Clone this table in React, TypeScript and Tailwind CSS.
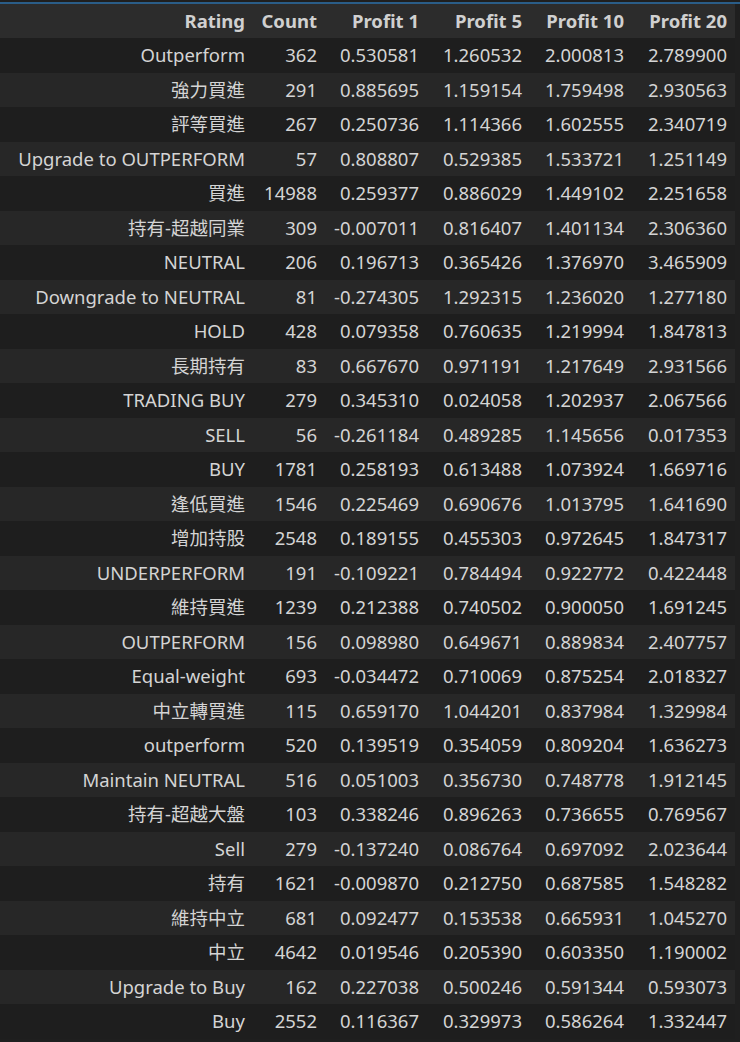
const rows: [string, number, string, string, string, string][] = [
  ["Outperform", 362, "0.530581", "1.260532", "2.000813", "2.789900"],
  ["強力買進", 291, "0.885695", "1.159154", "1.759498", "2.930563"],
  ["評等買進", 267, "0.250736", "1.114366", "1.602555", "2.340719"],
  ["Upgrade to OUTPERFORM", 57, "0.808807", "0.529385", "1.533721", "1.251149"],
  ["買進", 14988, "0.259377", "0.886029", "1.449102", "2.251658"],
  ["持有-超越同業", 309, "-0.007011", "0.816407", "1.401134", "2.306360"],
  ["NEUTRAL", 206, "0.196713", "0.365426", "1.376970", "3.465909"],
  ["Downgrade to NEUTRAL", 81, "-0.274305", "1.292315", "1.236020", "1.277180"],
  ["HOLD", 428, "0.079358", "0.760635", "1.219994", "1.847813"],
  ["長期持有", 83, "0.667670", "0.971191", "1.217649", "2.931566"],
  ["TRADING BUY", 279, "0.345310", "0.024058", "1.202937", "2.067566"],
  ["SELL", 56, "-0.261184", "0.489285", "1.145656", "0.017353"],
  ["BUY", 1781, "0.258193", "0.613488", "1.073924", "1.669716"],
  ["逢低買進", 1546, "0.225469", "0.690676", "1.013795", "1.641690"],
  ["增加持股", 2548, "0.189155", "0.455303", "0.972645", "1.847317"],
  ["UNDERPERFORM", 191, "-0.109221", "0.784494", "0.922772", "0.422448"],
  ["維持買進", 1239, "0.212388", "0.740502", "0.900050", "1.691245"],
  ["OUTPERFORM", 156, "0.098980", "0.649671", "0.889834", "2.407757"],
  ["Equal-weight", 693, "-0.034472", "0.710069", "0.875254", "2.018327"],
  ["中立轉買進", 115, "0.659170", "1.044201", "0.837984", "1.329984"],
  ["outperform", 520, "0.139519", "0.354059", "0.809204", "1.636273"],
  ["Maintain NEUTRAL", 516, "0.051003", "0.356730", "0.748778", "1.912145"],
  ["持有-超越大盤", 103, "0.338246", "0.896263", "0.736655", "0.769567"],
  ["Sell", 279, "-0.137240", "0.086764", "0.697092", "2.023644"],
  ["持有", 1621, "-0.009870", "0.212750", "0.687585", "1.548282"],
  ["維持中立", 681, "0.092477", "0.153538", "0.665931", "1.045270"],
  ["中立", 4642, "0.019546", "0.205390", "0.603350", "1.190002"],
  ["Upgrade to Buy", 162, "0.227038", "0.500246", "0.591344", "0.593073"],
  ["Buy", 2552, "0.116367", "0.329973", "0.586264", "1.332447"],
];

const headers = ["Rating", "Count", "Profit 1", "Profit 5", "Profit 10", "Profit 20"];
const widths = ["w-[253px]", "w-[72px]", "w-[102px]", "w-[103px]", "w-[102px]", "w-[103px]"];

export default function App() {
  return (
    <div
      className="w-[740px] h-[1042px] overflow-hidden bg-[#1f1f1f] text-[#d4d4d4]"
      style={{ fontFamily: '"Noto Sans", "Noto Sans CJK TC", sans-serif' }}
    >
      <div className="h-[2px]" />
      <div className="h-[2px] w-[740px] bg-[#2a5d88]" />
      <table className="w-[735px] border-collapse table-fixed text-[18.5px]">
        <thead>
          <tr className="h-[34px] bg-[#2c2c2c]">
            {headers.map((h, i) => (
              <th key={h} className={`${widths[i]} text-right pr-[8px] font-bold text-[#d0d0d0]`}>
                {h}
              </th>
            ))}
          </tr>
        </thead>
        <tbody>
          {rows.map((r, idx) => (
            <tr key={r[0]} className={idx % 2 === 0 ? "h-[34.5px] bg-[#1e1e1e]" : "h-[34.5px] bg-[#272727]"}>
              {r.map((c, i) => (
                <td key={i} className="text-right pr-[8px] whitespace-nowrap">
                  {c}
                </td>
              ))}
            </tr>
          ))}
        </tbody>
      </table>
    </div>
  );
}
